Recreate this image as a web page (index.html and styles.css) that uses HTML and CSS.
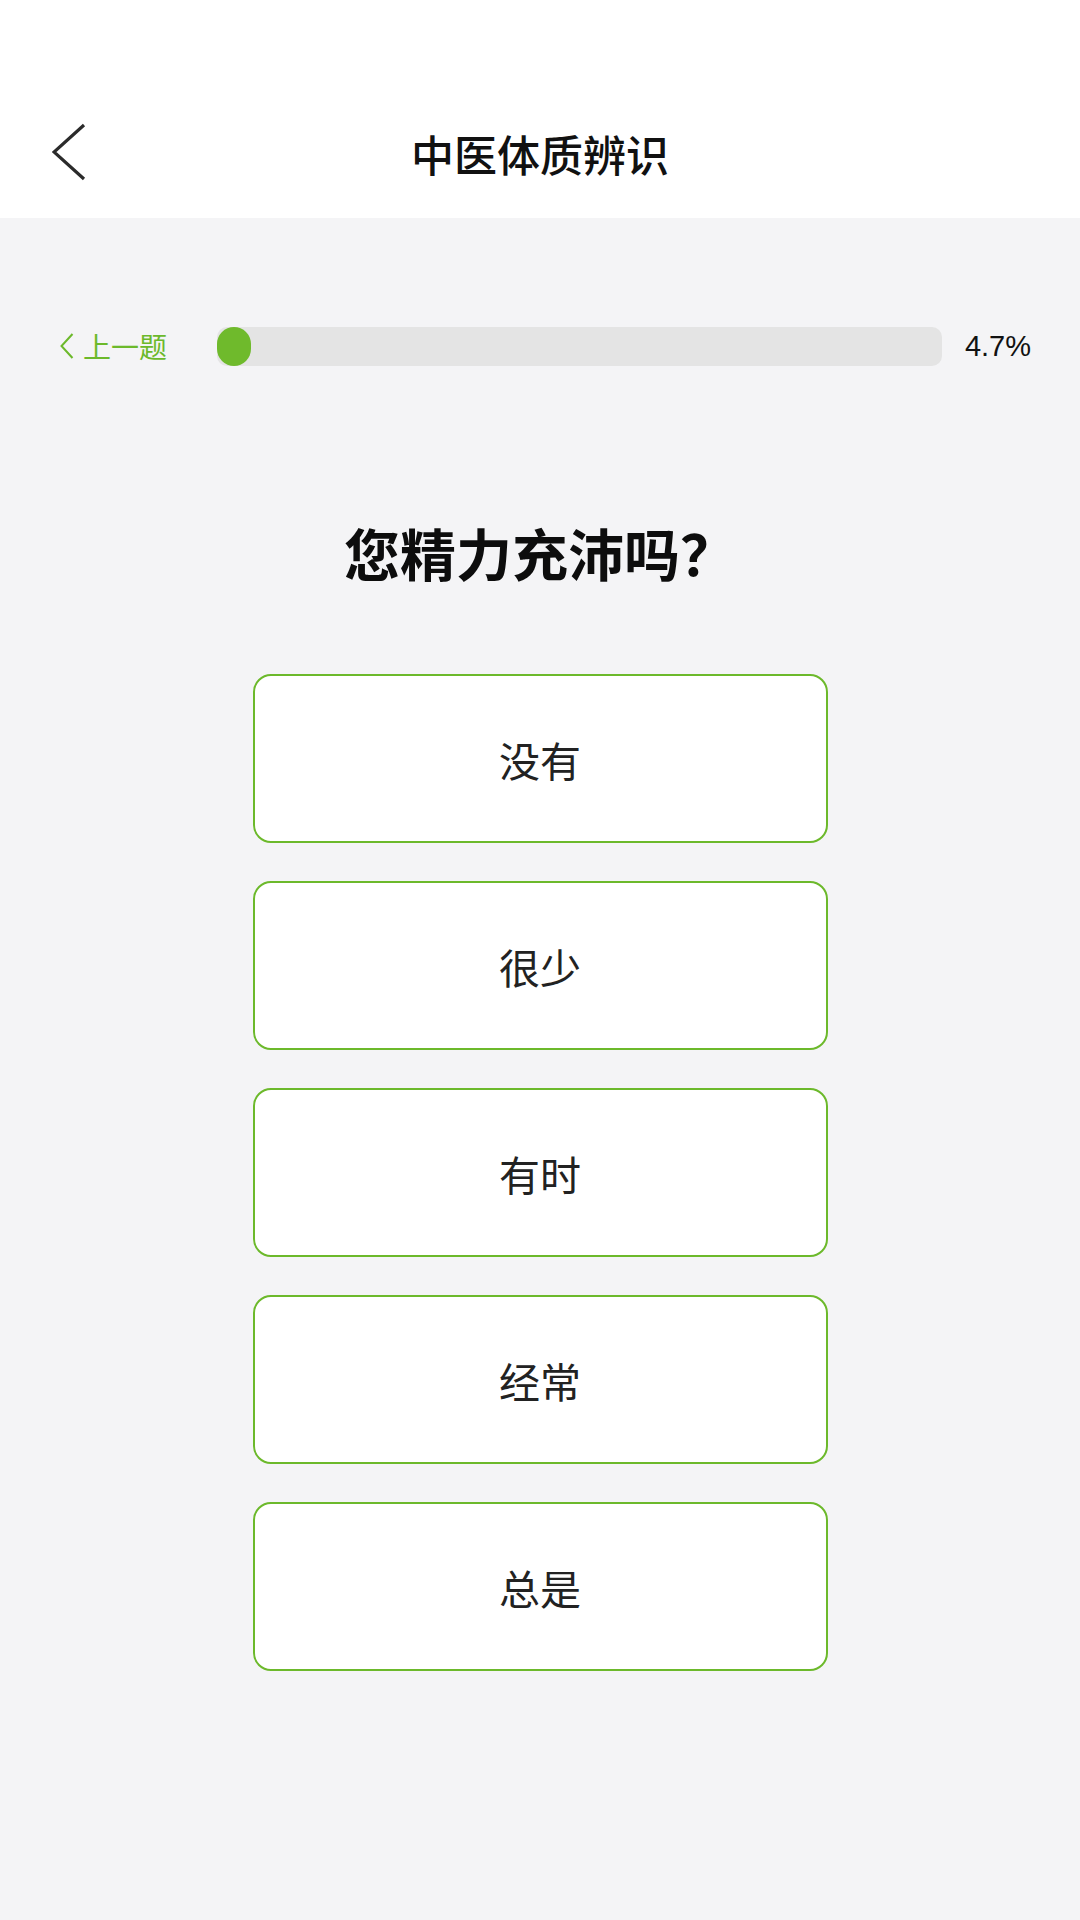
FILE: index.html
```html
<!DOCTYPE html>
<html lang="zh-CN">
<head>
<meta charset="utf-8">
<title>中医体质辨识</title>
<link rel="stylesheet" href="styles.css">
</head>
<body>
<header class="topbar">
  <div class="status"></div>
  <div class="navrow">
    <div class="nav-left">
      <svg class="back-icon" viewBox="0 0 36 60" width="36" height="60" aria-hidden="true">
        <polyline points="32,2 2,29 32,56" fill="none" stroke="#2b2b2b" stroke-width="3.2" stroke-linejoin="miter"/>
      </svg>
    </div>
    <h1 class="nav-title">中医体质辨识</h1>
    <div class="nav-right"></div>
  </div>
</header>

<main class="content">
  <div class="progress-row">
    <a class="prev-link">
      <svg class="prev-icon" viewBox="0 0 14 26" width="14" height="26" aria-hidden="true">
        <polyline points="12.5,1 1.5,13 12.5,25" fill="none" stroke="#6cb92b" stroke-width="2"/>
      </svg>
      <span>上一题</span>
    </a>
    <div class="bar"><div class="bar-fill" style="width:34px"></div></div>
    <span class="percent">4.7%</span>
  </div>

  <h2 class="question">您精力充沛吗？</h2>

  <div class="options">
    <button class="option">没有</button>
    <button class="option">很少</button>
    <button class="option">有时</button>
    <button class="option">经常</button>
    <button class="option">总是</button>
  </div>
</main>
</body>
</html>
```

FILE: styles.css
```css
* { box-sizing: border-box; }

html, body {
  margin: 0;
  padding: 0;
}

body {
  width: 1080px;
  min-height: 1920px;
  background: #f4f4f6;
  font-family: "Noto Sans CJK SC", "Noto Sans", sans-serif;
  color: #111;
}

.topbar {
  background: #ffffff;
}

.status {
  height: 88px;
}

.navrow {
  height: 130px;
  display: grid;
  grid-template-columns: 1fr auto 1fr;
  align-items: center;
}

.nav-left {
  display: flex;
  align-items: center;
  padding-left: 52px;
}

.back-icon {
  display: block;
}

.nav-title {
  margin: 0;
  font-size: 43px;
  font-weight: 500;
  line-height: 1;
  color: #111;
  letter-spacing: 0;
}

.content {
  display: flex;
  flex-direction: column;
  align-items: center;
}

.progress-row {
  width: 100%;
  margin-top: 108px;
  padding: 0 49px 0 60px;
  display: flex;
  align-items: center;
  height: 40px;
}

.prev-link {
  display: flex;
  align-items: center;
  gap: 9px;
  color: #6cb92b;
  font-size: 28px;
  line-height: 1;
  flex: none;
}

.prev-icon {
  display: block;
}

.bar {
  flex: 1;
  height: 39px;
  margin: 0 23px 0 50px;
  background: #e4e4e4;
  border-radius: 10px;
  overflow: hidden;
}

.bar-fill {
  height: 100%;
  background: #6fba2c;
  border-radius: 20px;
}

.percent {
  flex: none;
  font-family: "Liberation Sans", "Noto Sans", sans-serif;
  font-size: 29px;
  color: #111;
  line-height: 1;
}

.question {
  margin: 152px 0 0;
  font-size: 56px;
  line-height: 67px;
  font-weight: 700;
  color: #0d0d0d;
}

.options {
  margin-top: 89px;
  display: flex;
  flex-direction: column;
  gap: 38px;
}

.option {
  width: 575px;
  height: 169px;
  background: #ffffff;
  border: 2px solid #6cb92b;
  border-radius: 18px;
  font-family: "Noto Sans CJK SC", "Noto Sans", sans-serif;
  font-size: 41px;
  color: #222;
  padding: 0;
  cursor: pointer;
}
```
